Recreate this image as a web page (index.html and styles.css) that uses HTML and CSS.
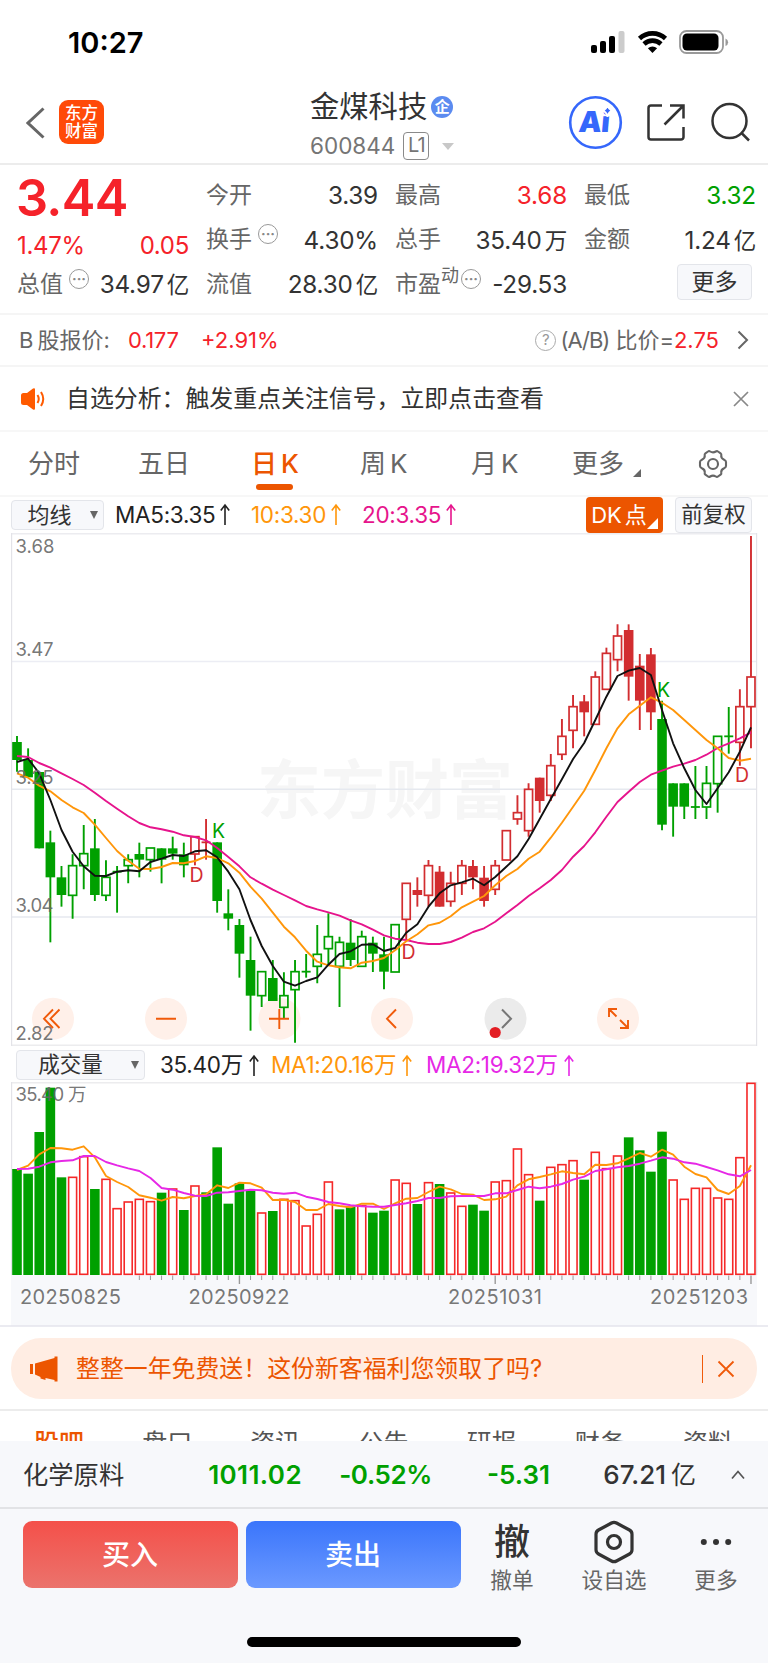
FILE: index.html
```html
<!DOCTYPE html>
<html lang="zh-CN">
<head>
<meta charset="utf-8">
<title>金煤科技 600844</title>
<link rel="stylesheet" href="styles.css">
</head>
<body>
<svg width="0" height="0" class="defs"><symbol id="up" viewBox="0 0 10 24"><path d="M5 2v20M.800 7.500L5 2l4.200 5.500" fill="none" stroke="currentColor" stroke-width="1.600"/></symbol></svg>
<div class="status">
  <span class="clock">10:27</span>
  <svg class="status-icons" width="140" height="28" viewBox="0 0 140 28">
    <rect x="1" y="17" width="6" height="8" rx="2"/><rect x="10" y="13" width="6" height="12" rx="2"/><rect x="19" y="8" width="6" height="17" rx="2"/><rect x="28.500" y="3" width="6" height="22" rx="2" fill="#ccc"/>
    <g fill="none" stroke="#000" stroke-width="4.600"><path d="M49.500 10.500a19 19 0 0 1 26 0"/><path d="M54 16a12.500 12.500 0 0 1 17 0"/></g>
    <path d="M62.500 25l-4.600-4.800a7 7 0 0 1 9.200 0z"/>
    <rect x="90" y="3" width="43" height="22" rx="6.500" fill="none" stroke="#999" stroke-width="1.800"/><rect x="92.500" y="5.500" width="36" height="17" rx="4.500"/><path d="M135.500 10.500q2.600 1 2.600 3.800t-2.600 3.800z" fill="#999"/>
  </svg>
</div>

<header class="header">
  <svg class="back" width="20" height="32" viewBox="0 0 20 32"><path d="M17.500 1.500L2 16l15.500 14.500"/></svg>
  <div class="brand"><span>东方</span><span>财富</span></div>
  <div class="title">
    <div class="name">金煤科技<i class="corp">企</i></div>
    <div class="code"><span>600844</span><b class="level">L1</b><i class="caret"></i></div>
  </div>
  <svg class="head-icons" width="190" height="56" viewBox="0 0 190 56">
    <circle cx="28.500" cy="28.500" r="25.300" fill="#fff" stroke="#3567fb" stroke-width="2.600"/>
    <text class="ai" transform="skewX(-5)" x="14.500" y="38.500" textLength="31">Ai</text>
    <path d="M40.500 10.500q.9 5.300 5.300 6.200q-4.400 1-5.300 6.200q-.9-5.200-5.300-6.200q4.400-.9 5.300-6.200z" fill="#3567fb" stroke="#fff" stroke-width="1.800"/>
    <g fill="none" stroke="#333" stroke-width="2.500"><path d="M95 11.500H84a2.500 2.500 0 0 0-2.500 2.500v29a2.500 2.500 0 0 0 2.500 2.500h30a2.500 2.500 0 0 0 2.500-2.500V33"/><path d="M103 11.500h13.500v13M116 12L97.500 30.500"/><circle cx="162.500" cy="27" r="17"/><path d="M174 38.500l8 8"/></g>
  </svg>
</header>

<section class="quote">
  <div class="col first">
    <div class="price red">3.44</div>
    <div class="row chg red"><span>1.47%</span><span>0.05</span></div>
    <div class="row"><label>总值<i class="tip">···</i></label><span>34.97<em>亿</em></span></div>
  </div>
  <div class="col">
    <div class="row"><label>今开</label><span>3.39</span></div>
    <div class="row"><label>换手<i class="tip">···</i></label><span>4.30%</span></div>
    <div class="row"><label>流值</label><span>28.30<em>亿</em></span></div>
  </div>
  <div class="col">
    <div class="row"><label>最高</label><span class="red">3.68</span></div>
    <div class="row"><label>总手</label><span>35.40<em>万</em></span></div>
    <div class="row"><label>市盈<sup>动</sup><i class="tip tight">···</i></label><span>-29.53</span></div>
  </div>
  <div class="col">
    <div class="row"><label>最低</label><span class="green">3.32</span></div>
    <div class="row"><label>金额</label><span>1.24<em>亿</em></span></div>
    <div class="row end"><button class="soft more">更多</button></div>
  </div>
</section>

<section class="bshare">
  <span class="b-label">B<em>股报价:</em></span><span class="red b-price">0.177</span><span class="red b-pct">+2.91%</span>
  <span class="ratio"><i class="help">?</i><span class="ab">(A/B)</span>比价=<b class="red">2.75</b></span>
  <svg width="12" height="20" viewBox="0 0 12 20"><path d="M1.500 1.500L10 10l-8.500 8.500" fill="none" stroke="#666" stroke-width="2"/></svg>
</section>

<section class="notice">
  <svg width="26" height="24" viewBox="0 0 26 24"><path d="M1 8.500q0-2.500 2.500-2.500H7l6-4.500q2-1 2 1v19q0 2-2 1L7 18H3.500Q1 18 1 15.500z" fill="#ff5a00"/><path d="M17.500 8q2.500 4 0 8M21 5q4.500 7 0 14" fill="none" stroke="#ff5a00" stroke-width="2"/></svg>
  <span>自选分析：触发重点关注信号，立即点击查看</span>
  <svg width="16" height="16" viewBox="0 0 16 16"><path d="M1 1l14 14M15 1L1 15" stroke="#888" stroke-width="1.700"/></svg>
</section>

<nav class="periods">
  <span>分时</span><span>五日</span><span class="on">日<b>K</b></span><span>周<b>K</b></span><span>月<b>K</b></span><span class="drop">更多</span>
  <svg class="gear" width="32" height="32" viewBox="0 0 32 32"><path d="M11 3.500q1-.8 2.200 0 2.800 1.800 5.600 0 1.200-.8 2.200 0l2.600 1.800q1 .8.700 2-.6 3 2.800 4.500 1.900.9 1.900 2.200v4q0 1.300-1.900 2.200-3.400 1.500-2.800 4.500.3 1.200-.7 2L21 28.500q-1 .8-2.200 0-2.800-1.800-5.600 0-1.200.8-2.200 0l-2.600-1.800q-1-.8-.7-2 .6-3-2.800-4.500Q3 19.300 3 18v-4q0-1.300 1.900-2.200 3.400-1.500 2.800-4.500-.3-1.200.7-2z"/><ellipse cx="16" cy="16" rx="5" ry="5"/></svg>
</nav>

<section class="indicators">
  <button class="soft ma-pick">均线<i class="tri"></i></button>
  <span class="m m5">MA5:3.35<svg class="up"><use href="#up"/></svg></span><span class="m m10">10:3.30<svg class="up"><use href="#up"/></svg></span><span class="m m20">20:3.35<svg class="up"><use href="#up"/></svg></span>
  <button class="dk">DK<em>点</em></button><button class="soft fq">前复权</button>
</section>
<svg id="candles" class="chart" width="768" height="513" viewBox="0 533 768 513"></svg>

<section class="indicators vol">
  <button class="soft vol-pick">成交量<i class="tri"></i></button>
  <span class="m v0">35.40万<svg class="up"><use href="#up"/></svg></span><span class="m v1">MA1:20.16万<svg class="up"><use href="#up"/></svg></span><span class="m v2">MA2:19.32万<svg class="up"><use href="#up"/></svg></span>
</section>
<svg id="volume" class="chart" width="768" height="245" viewBox="0 1082 768 245"></svg>

<section class="promo-wrap"><div class="promo">
  <svg width="29" height="26" viewBox="0 0 29 26"><path d="M1 8h3v10H1zM6 7.500L25.500 2V.500H28.500v25h-3V24L16.500 22v2l-5-1.500V21L6 18.500z" fill="#ec5500"/></svg>
  <span>整整一年免费送！这份新客福利您领取了吗?</span><i class="bar"></i>
  <svg width="18" height="18" viewBox="0 0 18 18"><path d="M1.500 1.500l15 15M16.500 1.500l-15 15" stroke="#f05a0a" stroke-width="1.800"/></svg>
</div></section>

<nav class="tabs"><span class="on">股吧</span><span>盘口</span><span>资讯</span><span>公告</span><span>研报</span><span>财务</span><span>资料</span></nav>

<section class="sector">
  <span class="s-name">化学原料</span><b class="s1">1011.02</b><b class="s2">-0.52%</b><b class="s3">-5.31</b><b class="s4">67.21<em>亿</em></b>
  <svg width="14" height="10" viewBox="0 0 14 10"><path d="M1 8.500l6-7 6 7" fill="none" stroke="#555" stroke-width="1.700"/></svg>
</section>

<footer class="actions">
  <button class="trade buy">买入</button><button class="trade sell">卖出</button>
  <div class="act a1"><span class="glyph">撤</span><span>撤单</span></div>
  <div class="act a2"><svg width="42" height="44" viewBox="0 0 42 44"><path d="M18.500 3q2.500-1.300 5 0l13 7q2.500 1.400 2.500 4.200v15.600q0 2.800-2.500 4.200l-13 7q-2.500 1.300-5 0l-13-7Q3 32.600 3 29.800V14.200Q3 11.400 5.500 10z"/><circle cx="21" cy="22" r="6.500"/></svg><span>设自选</span></div>
  <div class="act a3"><svg width="42" height="44" viewBox="0 0 42 44"><g class="dots"><circle cx="8.800" cy="22" r="3"/><circle cx="21" cy="22" r="3"/><circle cx="33.200" cy="22" r="3"/></g></svg><span>更多</span></div>
</footer>
<div class="home"><i></i></div>
<script src="chart.js"></script>
</body>
</html>
```
FILE: styles.css
```css
* { box-sizing: border-box; }
body { margin: 0; width: 768px; background: #fff; color: #333; font-family: Inter, "Noto Sans CJK SC", sans-serif; font-size: 23px; line-height: 1; overflow-x: hidden; }
i, em { font-style: normal; }
b { font-weight: 400; }
button { font: inherit; border: 0; padding: 0; margin: 0; color: #333; white-space: nowrap; display: flex; align-items: center; justify-content: center; }
svg { display: block; flex: none; }
span, label { white-space: nowrap; }
.red { color: #f5222a; }
.green { color: #00a000; }
.soft { background: #f7f8fb; border: 1.5px solid #e3e5ea; border-radius: 4px; }

.status { height: 82px; display: flex; justify-content: space-between; padding: 29px 38px 0 68px; }
.status-icons { margin-top: -1px; }
.clock { font-size: 29px; line-height: 28px; font-weight: 600; color: #000; }

.header { height: 83px; border-bottom: 2px solid #ececec; display: flex; align-items: flex-start; }
.back { margin: 25px 0 0 26px; fill: none; stroke: #666; stroke-width: 3; }
.brand { width: 45px; height: 44px; margin: 18px 0 0 13px; border-radius: 9px; background: #ff4a08; color: #fff; font-size: 16.500px; font-weight: 500; display: flex; flex-direction: column; align-items: center; justify-content: center; gap: 2px; }
.title { width: 240px; margin-left: 206px; padding-top: 10px; }
.name { font-size: 29.300px; line-height: 30px; display: flex; align-items: center; }
.corp { width: 22px; height: 22px; margin-left: 4px; border-radius: 50%; background: #5b8bf0; color: #fff; font-size: 15px; font-weight: 700; line-height: 21px; text-align: center; }
.code { margin-top: 10px; display: flex; align-items: center; color: #757575; font-size: 22.500px; letter-spacing: 0; }
.level { width: 26px; height: 28px; margin-left: 8px; border: 1.800px solid #8a8a8a; border-radius: 4px; font-size: 20px; line-height: 25px; text-align: center; letter-spacing: -1px; }
.caret { margin-left: 13px; border: 6.500px solid transparent; border-top: 7px solid #c8c8c8; border-bottom: 0; }
.head-icons { margin: 12px 0 0 17px; }
.ai { font: 900 29px Inter, sans-serif; fill: #3567fb; }

.quote { height: 150px; border-bottom: 2px solid #f5f5f5; padding: 0 12px 0 18px; display: flex; gap: 18px; }
.col { width: 171px; padding-top: 8px; }
.row { height: 44.500px; display: flex; align-items: center; justify-content: space-between; font-size: 24.300px; letter-spacing: -.2px; }
.row label { color: #666; font-size: 23px; letter-spacing: 0; display: flex; align-items: center; margin-left: -1px; }
.row em { font-size: 22.500px; margin-left: 3px; }
.price { height: 55px; margin-left: -2px; font-size: 50.500px; line-height: 54px; font-weight: 600; letter-spacing: -.7px; }
.chg { height: 36px; padding-top: 4px; margin-left: -1px; font-size: 24px; letter-spacing: -.3px; }
.first { padding-top: 6px; }
.tip { width: 20px; height: 20px; margin: -11px 0 0 6px; border: 1.500px solid #999; border-radius: 50%; color: #888; font-size: 14px; font-weight: 700; line-height: 17px; letter-spacing: 0; text-align: center; }
.tip.tight { margin-left: 2px; }
.row sup { font-size: 18px; margin-top: -16px; line-height: 1; }
.row.end { justify-content: flex-end; padding-right: 4px; }
.more { width: 75px; height: 36px; margin-top: -4px; font-size: 23px; letter-spacing: 0; }

.bshare { height: 52px; border-bottom: 2px solid #f5f5f5; padding: 0 19px 0 19px; display: flex; align-items: center; font-size: 22px; }
.b-label { color: #666; width: 109px; }
.b-label em { margin-left: 4px; }
.b-price { width: 73px; letter-spacing: -.3px; }
.b-pct { letter-spacing: 0; }
.ratio { margin: 0 18px 0 auto; display: flex; align-items: center; color: #666; }
.ab { margin-right: 6px; letter-spacing: -1px; }
.help { width: 21px; height: 21px; margin-right: 4px; border: 1.500px solid #aaa; border-radius: 50%; color: #999; font-size: 15px; line-height: 18px; text-align: center; }

.notice { height: 65px; border-bottom: 2px solid #f7f7f7; padding: 0 19px 0 20px; display: flex; align-items: center; }
.notice span { margin: 0 auto 0 20px; font-size: 23.900px; }

.periods { height: 65px; border-bottom: 2px solid #f7f7f7; padding-left: 28px; display: flex; align-items: center; color: #666; font-size: 26px; }
.periods span { width: 110px; height: 100%; display: flex; align-items: center; gap: 4px; position: relative; }
.periods span:nth-child(3) { margin-left: 3px; width: 109px; }
.periods span:nth-child(4) { width: 111px; }
.periods span:nth-child(5) { width: 101px; }
.periods .on { color: #ec5500; font-weight: 500; }
.periods .on b { font-weight: 500; }
.on::after { content: ""; position: absolute; left: 5px; bottom: 5px; width: 37px; height: 6px; border-radius: 3px; background: #ec5500; }
.drop::after { content: ""; margin: 18px 0 0 5px; border-left: 8px solid transparent; border-bottom: 8px solid #666; }
.gear { margin-left: 15px; fill: none; stroke: #666; stroke-width: 2.100; stroke-linejoin: round; }

.indicators { height: 36px; padding-left: 11px; display: flex; align-items: center; font-size: 22.500px; }
.ma-pick { width: 93px; height: 30px; gap: 18px; padding-left: 10px; font-size: 22px; }
.tri { border: 4.500px solid transparent; border-top: 8px solid #666; border-bottom: 0; }
.m { display: flex; align-items: center; color: #222; letter-spacing: -.3px; }
.up { width: 10px; height: 24px; margin-left: 5px; }
.m5 { margin-left: 11px; width: 136px; }
.m10, .m.v1 { color: #ff960a; }
.m10 { width: 111px; }
.m20 { color: #e6148c; width: 224px; }
.dk { width: 77px; height: 36px; background: #ec5500; border-radius: 4px; color: #fff; font-size: 22px; position: relative; padding-right: 11px; }
.dk em { margin-left: 3px; }
.dk::after { content: ""; position: absolute; right: 5px; bottom: 4px; border-left: 11px solid transparent; border-bottom: 11px solid #fff; }
.fq { width: 77px; height: 36px; margin-left: 12px; font-size: 21.500px; }
.vol { padding: 3px 0 0 16px; }
.vol .up { margin-left: 6px; }
.vol-pick { width: 129px; height: 30px; padding-left: 16px; gap: 28px; font-size: 21.500px; margin-top: -1px; }
.v0 { margin-left: 15px; width: 111px; }
.v1 { width: 155px; }
.m.v2 { color: #e628e6; }
.chart text { font-family: Inter, "Noto Sans CJK SC", sans-serif; }
.axis { font-size: 18.500px; fill: #666; fill-opacity: .9; }
.axis.date { font-size: 20px; }
.chart .watermark { font-size: 64px; font-weight: 700; fill: #f6f6f6; }

.promo-wrap { height: 84px; padding: 11px 11px 0; border-bottom: 2px solid #ececec; }
.promo { height: 61px; border-radius: 30px; background: #ffede3; display: flex; align-items: center; padding: 0 22px 0 18px; color: #ec5500; font-size: 23.900px; }
.promo span { margin: 0 auto 0 18px; }
.bar { width: 1.500px; height: 28px; margin-right: 14px; background: #f05a0a; }

.tabs { height: 30px; overflow: hidden; display: flex; justify-content: space-between; padding: 18px 35px 0 34px; color: #555; font-size: 25px; line-height: 28px; }
.tabs .on { color: #ec5500; font-weight: 500; }
.tabs .on::after { content: none; }

.sector { height: 68px; background: #f7f8fb; border-bottom: 2px solid #e2e3e6; display: flex; align-items: center; padding: 1px 23px 0; font-size: 26px; }
.sector b { font-weight: 500; text-align: right; }
.s-name { width: 98px; font-size: 25.300px; }
.s1 { width: 181px; color: #00a000; letter-spacing: .4px; }
.sector .s1, .sector .s2, .sector .s3 { font-weight: 600; }
.s2 { width: 130px; color: #00a000; letter-spacing: -.4px; }
.s3 { width: 118px; color: #00a000; }
.s4 { width: 146px; }
.s4 em { font-weight: 400; font-size: 25px; margin-left: 5px; }
.sector svg { margin-left: auto; }

.actions { height: 128px; background: #f7f8fb; padding: 12px 0 0 22.500px; display: flex; align-items: flex-start; }
.trade { width: 215px; height: 67px; border-radius: 9px; color: #fff; font-size: 28px; font-weight: 500; margin-right: 8px; }
.buy { background: linear-gradient(#f4504a, #eb736c); }
.sell { background: linear-gradient(#3a75fb, #6b99ff); }
.act { display: flex; flex-direction: column; align-items: center; color: #666; font-size: 21.700px; }
.act > :first-child { height: 44px; margin-bottom: 5px; margin-top: -1px; }
.act > :last-child { margin-top: 1px; }
.act svg { fill: none; stroke: #333; stroke-width: 3.200; }
.act .dots { fill: #333; stroke: none; }
.glyph { font-size: 36px; line-height: 44px; font-weight: 500; color: #333; }
.a1 { margin-left: 13.500px; width: 60px; }
.a2 { margin-left: 32px; width: 80px; }
.a3 { margin-left: 32px; width: 60px; }
.home { height: 26px; background: #f7f8fb; display: flex; justify-content: center; align-items: flex-start; }
.home i { width: 274px; height: 10px; border-radius: 5px; background: #000; }
.defs { position: absolute; }
```
FILE: chart.js
```js
// Coordinates are stored in thirds of a pixel, relative to each pane's origin.
const PRICE_Y = 740, VOL_Y = 1040, X0 = 17, STEP = 11.121;
const RED = '#d22d30', GREEN = '#00a000';
const cx = i => X0 + i * STEP;

// wick top, body top, body bottom, wick bottom; g/r colour, f filled, h hollow, d doji
const bars = `-12 6 60 95 gf|25 60 112 112 gf|96 96 325 325 gf|272 307 412 607 gf|378 412 465 500 gf|343 377 466 536 gh|255 341 377 448 gh|237 325 465 483 gf|361 412 466 483 gh|378 395 395 518 gd|343 359 377 430 gh|308 342 359 412 gf|324 324 359 395 gh|325 325 359 430 gf|290 325 341 359 gf|308 343 376 412 gf|290 290 342 376 rh|237 307 307 359 rd|307 307 483 518 gf|448 520 536 571 gf|537 555 641 713 gf|590 660 767 872 gf|695 695 767 801 gh|660 714 783 783 gf|697 767 802 835 gh|660 695 749 908 gh|642 695 695 713 gd|555 643 679 730 gh|520 590 626 676 gh|590 607 679 801 gh|537 608 660 678 gf|572 590 679 679 gh|590 608 641 696 gf|590 643 695 748 gf|554 554 696 696 gh|430 430 538 600 rh|412 450 465 500 rf|360 377 466 500 rh|378 395 500 500 rf|395 430 484 500 rh|360 377 430 465 rh|360 378 412 448 rf|378 413 483 500 rf|360 377 448 465 rh|272 272 360 360 rh|166 218 237 254 rh|130 148 272 290 rh|113 113 183 218 rf|42 77 166 183 rh|-63 -11 43 60 rh|-135 -100 -29 25 rh|-135 -116 -83 -11 rf|-206 -189 -47 -47 rh|-277 -260 -152 -152 rh|-347 -312 -241 -206 rh|-347 -330 -190 -118 rf|-258 -223 -118 -30 rf|-276 -257 -83 -30 rf|-118 -63 254 271 gf|130 130 200 290 gf|130 130 200 237 gf|78 201 201 237 gd|78 130 201 237 gh|-11 -11 131 218 gh|-99 -11 -11 41 gd|-152 -100 7 77 rh|-612 -189 -100 25 rh`.split('|');

const ma5 = [66,56,100,180,270,335,379,407,408,395,391,394,366,356,345,348,334,331,352,395,448,540,618,678,725,737,723,712,674,642,634,614,613,633,624,578,553,500,460,436,427,416,436,411,380,349,297,237,177,118,57,9,-60,-130,-192,-208,-216,-195,-90,10,85,150,192,145,97,35,-38];
const ma10 = [100,113,137,154,180,202,219,254,294,333,362,386,387,381,369,370,363,349,354,370,398,440,476,518,560,592,632,665,676,682,685,668,663,654,631,604,583,556,548,529,502,485,468,436,408,387,356,335,293,248,200,152,90,25,-35,-77,-103,-128,-112,-90,-60,-30,0,25,54,62,56];
const ma20 = [48,51,69,83,100,117,135,158,183,206,229,249,262,268,275,286,291,301,324,351,379,412,431,449,465,481,498,508,517,527,541,553,569,586,596,600,608,612,612,606,593,576,565,545,520,495,468,445,420,390,350,318,277,230,186,155,126,104,92,80,71,60,44,24,10,-5,-23];

const vols = '387g 401g 276g 143g 412g 412r 350r 447g 418r 506r 486r 478r 485r 458g 447r 510g 438r 457g 322g 491g 430g 450g 519r 513g 478r 482r 558r 523r 426r 508g 500g 497r 518g 512g 420r 430r 492g 428r 432g 459r 499r 494g 512g 426r 422r 327r 404r 482g 382r 374r 362r 419g 337r 386r 348r 292g 331g 395g 275g 420r 478r 445r 445r 474r 478r 353r 130r'.split(' ');
const vma1 = [390,377,343,324,325,329,319,352,408,426,441,466,473,482,471,475,468,463,436,444,428,430,443,480,479,486,510,510,492,498,502,491,491,507,490,476,474,456,440,448,462,464,480,478,470,436,418,411,403,394,399,403,374,375,370,355,339,350,329,344,380,402,412,450,462,438,376];
const vma2 = [387,386,380,367,363,361,348,348,366,376,385,393,414,444,449,459,467,468,458,457,453,449,451,458,461,458,470,477,486,490,496,499,500,500,495,490,483,474,474,469,468,468,468,460,460,450,440,445,440,432,419,410,393,388,382,378,371,362,352,356,367,371,381,391,403,409,390];

const curve = (arr, base, color) => `<polyline fill="none" stroke="${color}" stroke-width="1.900" stroke-linejoin="round" points="${arr.map((v, i) => cx(i).toFixed(1) + ',' + (base + v / 3).toFixed(1)).join(' ')}"/>`;
const hline = (y, c, x1 = 11, x2 = 757) => `<path d="M${x1} ${y}H${x2}" stroke="${c}" stroke-width="1.600"/>`;
const label = (x, y, t, w, cls = '') => `<text class="axis ${cls}" x="${x}" y="${y}" textLength="${w}">${t}</text>`;

let s = '<text class="watermark" x="257" y="813" textLength="256">东方财富</text>';
s += hline(533.8, '#ececf0') + hline(661.5, '#ecedf4') + hline(789.3, '#e6e9ef') + hline(917, '#e6e9ef') + hline(1045.2, '#ececee');
s += '<path d="M11.600 533V1046M756.600 533V1046" stroke="#e3e3e8" stroke-width="1.200"/>';
[53, 166, 279.5, 392, 505.5, 618].forEach((x, i) => {
  s += `<circle cx="${x}" cy="1018.700" r="21" fill="${i === 4 ? '#ebebeb' : '#fff0e9'}"/>`;
});
bars.forEach((row, i) => {
  const p = row.split(' '), [a, b, c, d] = p.slice(0, 4).map(v => PRICE_Y + v / 3), x = cx(i);
  const col = p[4][0] === 'g' ? GREEN : RED, kind = p[4][1];
  s += `<path d="M${x} ${a}V${kind === 'h' ? b : d}${kind === 'h' ? `M${x} ${c}V${d}` : ''}" stroke="${col}" stroke-width="1.900"/>`;
  if (kind === 'f') s += `<rect x="${x - 4.8}" y="${b}" width="9.600" height="${c - b}" fill="${col}"/>`;
  if (kind === 'h') s += `<rect x="${x - 4}" y="${b}" width="8" height="${c - b}" fill="none" stroke="${col}" stroke-width="1.700"/>`;
  if (kind === 'd') s += `<path d="M${x - 4.5} ${b}h9" stroke="${col}" stroke-width="1.800"/>`;
});
s += curve(ma20, PRICE_Y, '#e6148c') + curve(ma10, PRICE_Y, '#ff960a') + curve(ma5, PRICE_Y, '#111');
[['K', 212, 837.500, GREEN], ['D', 189.5, 882, RED], ['D', 401.500, 958.500, RED], ['K', 657, 697, GREEN], ['D', 735, 781.500, RED]]
  .forEach(([t, x, y, c]) => { s += `<text x="${x}" y="${y}" font-size="19.500" fill="${c}">${t}</text>`; });
s += label(15.5, 553, '3.68', 39) + label(15.5, 655.5, '3.47', 38) + label(15.5, 784, '3.25', 38) + label(15.5, 911.5, '3.04', 38) + label(15.5, 1040, '2.82', 38);
s += `<g fill="none" stroke="#f05a0a" stroke-width="1.900"><path d="M53 1009.500l-9 9.200 9 9.300M59.500 1009.500l-9 9.200 9 9.300M156 1018.700h20M269 1018.700h20M279.300 1009v20M396 1009.500l-9 9.200 9 9.300"/><path d="M609 1017v-8h8M609 1009l7.500 7.500M628 1020v8h-8M628 1028l-8-8"/></g>`;
s += '<path d="M502 1009.500l9 9.200-9 9.300" fill="none" stroke="#777" stroke-width="2"/><circle cx="495.200" cy="1032.500" r="5.600" fill="#e31e24"/>';
document.getElementById('candles').innerHTML = s;

let v = '<rect x="11" y="1275" width="746" height="51" fill="#f7f8fb"/>' + hline(1082.8, '#ececee') + hline(1326, '#e4e4ec', 0, 768);
v += '<path d="M11.600 1082V1275M756.600 1082V1275" stroke="#e3e3e8" stroke-width="1.200"/>';
vols.forEach((t, i) => {
  const y = VOL_Y + parseInt(t) / 3, x = cx(i);
  v += t.endsWith('g')
    ? `<rect x="${x - 4.8}" y="${y}" width="9.600" height="${1275 - y}" fill="${GREEN}"/>`
    : `<rect x="${x - 4}" y="${y}" width="8" height="${1274.3 - y}" fill="#fff" stroke="#f52828" stroke-width="1.600"/>`;
  if (i > 10) v += `<path d="M${x} 1275.500v${[20, 43, 66].includes(i) ? 8.5 : 4.5}" stroke="#999" stroke-width="${[20, 43, 66].includes(i) ? 1.4 : 1}"/>`;
});
v += curve(vma1, VOL_Y, '#ff960a') + curve(vma2, VOL_Y, '#e628e6') + label(15.500, 1101, '35.40 万', 71);
v += label(20, 1304, '20250825', 101, 'date') + label(188.500, 1304, '20250922', 101, 'date') + label(448, 1304, '20251031', 94, 'date') + label(650, 1304, '20251203', 98, 'date');
document.getElementById('volume').innerHTML = v;
```
